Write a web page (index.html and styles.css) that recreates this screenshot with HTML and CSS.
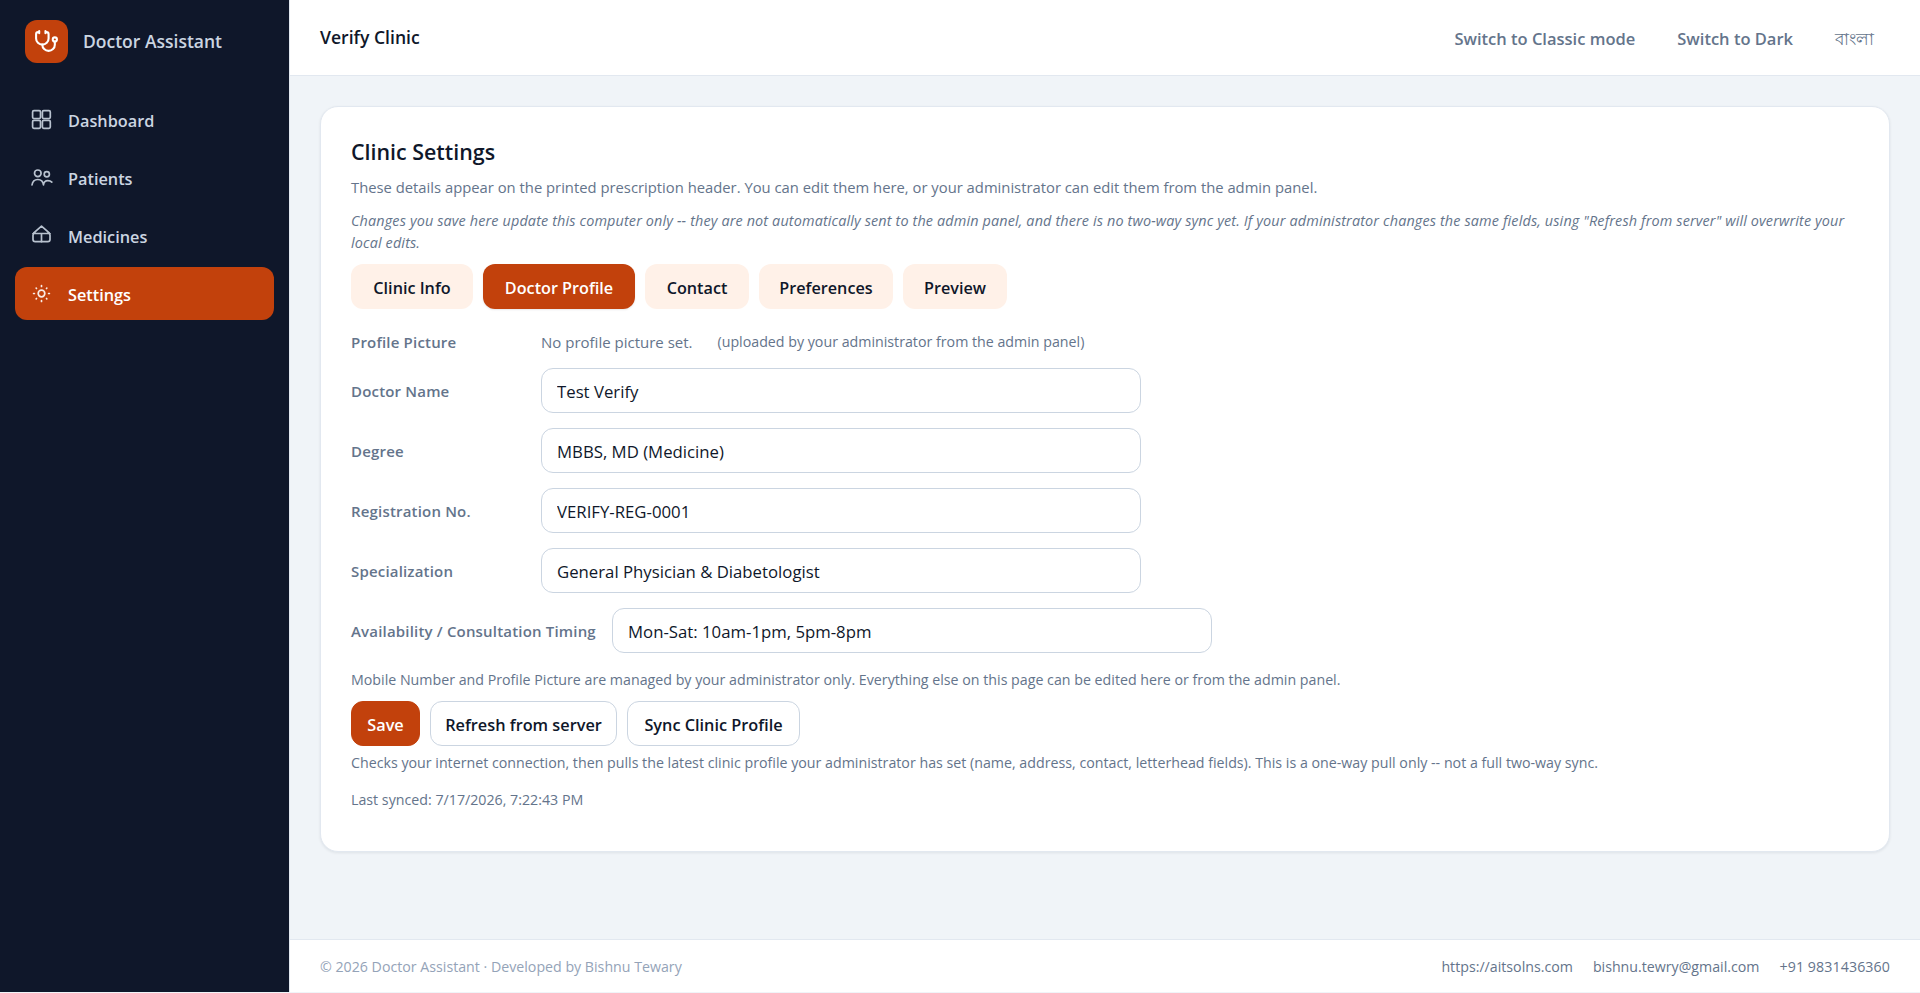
FILE: index.html
```html
<!DOCTYPE html>
<html lang="en">
<head>
<meta charset="UTF-8">
<meta name="viewport" content="width=device-width, initial-scale=1.0">
<title>Doctor Assistant</title>
<link rel="stylesheet" href="styles.css">
</head>
<body>

<div class="app">
    <aside class="sidebar">
        <div class="brand">
            <div class="brand-logo">
                <svg width="25" height="25" viewBox="0 0 24 24">
                    <path d="M11 2v2M5 2v2M5 3H4a2 2 0 0 0-2 2v4a6 6 0 0 0 12 0V5a2 2 0 0 0-2-2h-1"/>
                    <path d="M8 15a6 6 0 0 0 12 0v-3"/>
                    <circle cx="20" cy="10" r="2"/>
                </svg>
            </div>
            <span class="brand-name">Doctor Assistant</span>
        </div>
        <nav class="nav">
            <a class="nav-item">
                <svg class="nav-icon" viewBox="0 0 23 23">
                    <rect x="2.6" y="2.6" width="7.9" height="7.9" rx="1.3"/>
                    <rect x="12.4" y="2.6" width="7.9" height="7.9" rx="1.3"/>
                    <rect x="2.6" y="12.4" width="7.9" height="7.9" rx="1.3"/>
                    <rect x="12.4" y="12.4" width="7.9" height="7.9" rx="1.3"/>
                </svg>
                <span>Dashboard</span>
            </a>
            <a class="nav-item">
                <svg class="nav-icon" viewBox="0 0 23 23">
                    <circle cx="7.8" cy="7.3" r="3.3"/>
                    <circle cx="16.8" cy="8.3" r="2.6"/>
                    <path d="M2 19c.5-3.4 2.8-5.5 5.8-5.5s5.3 2.1 5.7 5.5M13.5 18.5c.5-2.6 2-3.9 4.2-3.9 1.7 0 3.1.4 4.1 1.5"/>
                </svg>
                <span>Patients</span>
            </a>
            <a class="nav-item">
                <svg class="nav-icon" viewBox="0 0 23 23">
                    <path d="M3.8 8.8l7.7-6.7 7.7 6.7M3 9.5h17M11.5 9.5v8.2"/>
                    <path d="M4.8 8.8C3.6 9.3 3 10.2 3 11.3v4.2c0 1.3.9 2.2 2.2 2.2h12.6c1.3 0 2.2-.9 2.2-2.2v-4.2c0-1.1-.6-2-1.8-2.5"/>
                </svg>
                <span>Medicines</span>
            </a>
            <a class="nav-item active">
                <svg class="nav-icon" viewBox="0 0 23 23">
                    <circle cx="11.5" cy="11.5" r="3.3"/>
                    <path d="M11.5 3.6v.8M11.5 18.6v.8M3.6 11.5h.8M18.6 11.5h.8M6.2 6.2l.3.3M16.5 16.5l.3.3M6.2 16.8l.3-.3M16.5 6.5l.3-.3"/>
                </svg>
                <span>Settings</span>
            </a>
        </nav>
    </aside>

    <div class="main">
        <header class="topbar">
            <div class="clinic-name">Verify Clinic</div>
            <div class="topbar-actions">
                <a>Switch to Classic mode</a>
                <a>Switch to Dark</a>
                <a class="lang-link" lang="bn">বাংলা</a>
            </div>
        </header>

        <main class="content">
            <section class="card">
                <h2 class="title">Clinic Settings</h2>
                <p class="intro">These details appear on the printed prescription header. You can edit them here, or your administrator can edit them from the admin panel.</p>
                <p class="note">Changes you save here update this computer only -- they are not automatically sent to the admin panel, and there is no two-way sync yet. If your administrator changes the same fields, using "Refresh from server" will overwrite your local edits.</p>

                <div class="tabs">
                    <button class="tab tab-info">Clinic Info</button>
                    <button class="tab tab-profile active">Doctor Profile</button>
                    <button class="tab tab-contact">Contact</button>
                    <button class="tab tab-prefs">Preferences</button>
                    <button class="tab tab-preview">Preview</button>
                </div>

                <div class="picture-row">
                    <span class="label">Profile Picture</span>
                    <span class="picture-state">No profile picture set.</span>
                    <span class="hint">(uploaded by your administrator from the admin panel)</span>
                </div>
                <div class="form-row">
                    <label class="label" for="name">Doctor Name</label>
                    <input type="text" id="name" value="Test Verify">
                </div>
                <div class="form-row">
                    <label class="label" for="degree">Degree</label>
                    <input type="text" id="degree" value="MBBS, MD (Medicine)">
                </div>
                <div class="form-row">
                    <label class="label" for="reg">Registration No.</label>
                    <input type="text" id="reg" value="VERIFY-REG-0001">
                </div>
                <div class="form-row">
                    <label class="label" for="spec">Specialization</label>
                    <input type="text" id="spec" value="General Physician &amp; Diabetologist">
                </div>
                <div class="form-row">
                    <label class="label label-wide" for="timing">Availability / Consultation Timing</label>
                    <input type="text" id="timing" value="Mon-Sat: 10am-1pm, 5pm-8pm">
                </div>

                <p class="hint managed">Mobile Number and Profile Picture are managed by your administrator only. Everything else on this page can be edited here or from the admin panel.</p>
                <div class="buttons">
                    <button class="btn btn-primary">Save</button>
                    <button class="btn btn-refresh">Refresh from server</button>
                    <button class="btn btn-sync">Sync Clinic Profile</button>
                </div>
                <p class="hint sync-help">Checks your internet connection, then pulls the latest clinic profile your administrator has set (name, address, contact, letterhead fields). This is a one-way pull only -- not a full two-way sync.</p>
                <p class="hint synced">Last synced: 7/17/2026, 7:22:43 PM</p>
            </section>
        </main>

        <footer class="footer">
            <span class="copyright">© 2026 Doctor Assistant · Developed by Bishnu Tewary</span>
            <div class="footer-links">
                <a>https://aitsolns.com</a>
                <a>bishnu.tewry@gmail.com</a>
                <a class="phone">+91 9831436360</a>
            </div>
        </footer>
    </div>
</div>

</body>
</html>
```

FILE: styles.css
```css
* {
    box-sizing: border-box;
}
body {
    margin: 0;
    font-family: "Segoe UI", "Open Sans", "Noto Sans", sans-serif;
    font-size: 16px;
    color: #0f172a;
    background-color: #f0f4f8;
}
p, h2 {
    margin: 0;
}
svg {
    fill: none;
    stroke: currentColor;
    stroke-linecap: round;
    stroke-linejoin: round;
}
.app {
    display: flex;
    height: 992px;
}

/* sidebar */
.sidebar {
    width: 290px;
    flex-shrink: 0;
    background-color: #0f172a;
    border-right: 1px solid #e2e8f0;
    color: #cbd5e1;
}
.brand {
    display: flex;
    align-items: center;
    gap: 15px;
    padding: 20px 25px 0;
}
.brand-logo {
    display: flex;
    align-items: center;
    justify-content: center;
    width: 43px;
    height: 43px;
    border-radius: 12px;
    background-color: #c2410c;
    color: #fff;
}
.brand-logo svg {
    stroke-width: 2;
}
.brand-name {
    padding-bottom: 2px;
    font-size: 17.5px;
    font-weight: 600;
}
.nav {
    display: flex;
    flex-direction: column;
    gap: 5px;
    padding: 30px 15px 0;
}
.nav-item {
    display: flex;
    align-items: center;
    gap: 15px;
    height: 53px;
    padding: 0 15px;
    border-radius: 12px;
    font-size: 16.3px;
    font-weight: 600;
}
.nav-item span {
    padding-top: 2px;
}
.nav-item.active {
    background-color: #c2410c;
    color: #fff;
}
.nav-icon {
    width: 23px;
    height: 23px;
    stroke-width: 1.7;
    opacity: 0.9;
}

/* right side */
.main {
    flex: 1;
    display: flex;
    flex-direction: column;
    min-width: 0;
}
.topbar {
    display: flex;
    align-items: center;
    justify-content: space-between;
    height: 76px;
    padding: 0 46px 0 30px;
    background-color: #fff;
    border-bottom: 1px solid #e2e8f0;
}
.clinic-name {
    padding-bottom: 2px;
    font-size: 17.6px;
    font-weight: 600;
}
.topbar-actions {
    display: flex;
    align-items: center;
    gap: 42px;
    padding-top: 2px;
    font-size: 16.5px;
    font-weight: 600;
    color: #64748b;
}
.lang-link {
    padding-top: 3px;
    font-size: 17.3px;
    font-weight: 500;
}
.content {
    flex: 1;
    padding: 30px;
}
.card {
    height: 746px;
    padding: 30px;
    background-color: #fff;
    border: 1px solid #e2e8f0;
    border-radius: 18px;
    box-shadow: 0 1px 3px rgba(15, 23, 42, 0.08);
}
.title {
    font-size: 21.4px;
    line-height: 30px;
    font-weight: 600;
}
.intro {
    margin-top: 8px;
    font-size: 14.8px;
    line-height: 24px;
    color: #64748b;
}
.note {
    margin-top: 11px;
    font-size: 14.4px;
    line-height: 22px;
    letter-spacing: 0.14px;
    font-style: italic;
    color: #64748b;
}
.tabs {
    display: flex;
    gap: 10px;
    margin-top: 10px;
}
.tab {
    height: 45px;
    padding: 2px 0 0;
    border: none;
    border-radius: 12px;
    background-color: #fff1e8;
    color: #0f172a;
    font-family: inherit;
    font-size: 16.2px;
    font-weight: 600;
}
.tab.active {
    background-color: #c2410c;
    color: #fff;
    box-shadow: 0 1px 2px rgba(15, 23, 42, 0.1);
}
.tab-info {
    width: 122px;
}
.tab-profile {
    width: 152px;
}
.tab-contact {
    width: 104px;
}
.tab-prefs {
    width: 134px;
}
.tab-preview {
    width: 104px;
}
.picture-row {
    display: flex;
    align-items: center;
    height: 24px;
    margin-top: 21px;
    margin-bottom: 14px;
}
.picture-state {
    margin-right: 25px;
    padding-bottom: 1px;
    font-size: 15px;
    color: #64748b;
}
.form-row {
    display: flex;
    align-items: center;
    margin-bottom: 15px;
}
.label {
    width: 190px;
    font-size: 15px;
    letter-spacing: 0.18px;
    font-weight: 600;
    color: #64748b;
}
.label-wide {
    width: 261px;
    white-space: nowrap;
}
input[type="text"] {
    width: 600px;
    height: 45px;
    padding: 1px 15px 0;
    border: 1px solid #cbd5e1;
    border-radius: 12px;
    background-color: #fff;
    color: #0f172a;
    font-family: inherit;
    font-size: 16.75px;
}
.hint {
    font-size: 14.22px;
    line-height: 22px;
    color: #64748b;
}
.managed {
    margin-top: 16px;
}
.buttons {
    display: flex;
    gap: 10px;
    margin-top: 10px;
}
.btn {
    height: 45px;
    padding: 2px 0 0;
    border: 1px solid #cbd5e1;
    border-radius: 12px;
    background-color: #fff;
    color: #0f172a;
    font-family: inherit;
    font-size: 16.3px;
    font-weight: 600;
}
.btn-primary {
    width: 69px;
    border-color: #c2410c;
    background-color: #c2410c;
    color: #fff;
}
.btn-refresh {
    width: 187px;
}
.btn-sync {
    width: 173px;
}
.sync-help {
    margin-top: 6px;
}
.synced {
    margin-top: 15px;
}
.footer {
    display: flex;
    align-items: center;
    justify-content: space-between;
    height: 53px;
    padding: 0 30px;
    background-color: #fff;
    border-top: 1px solid #e2e8f0;
    font-size: 14.2px;
    color: #64748b;
}
.copyright {
    color: #94a3b8;
}
.footer-links {
    display: flex;
    gap: 20px;
}
.phone {
    letter-spacing: 0.1px;
}
```
